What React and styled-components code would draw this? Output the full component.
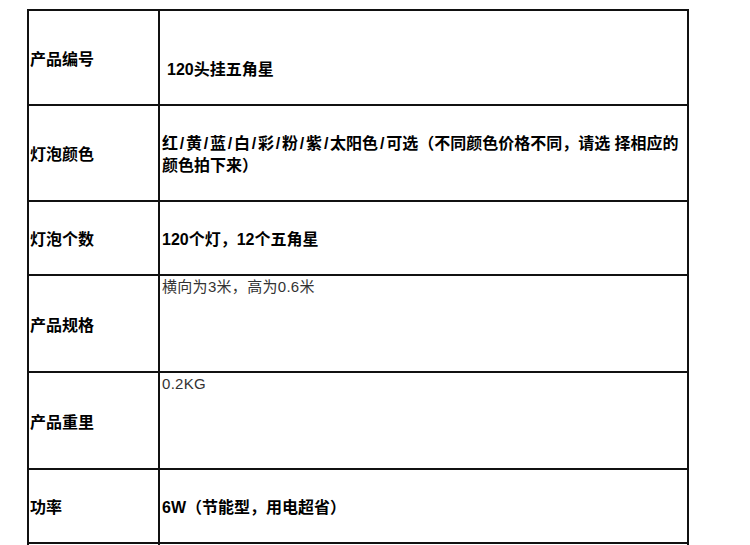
import React from 'react';
import styled, { createGlobalStyle } from 'styled-components';

const GlobalStyle = createGlobalStyle`
    html, body {
        margin: 0;
        padding: 0;
        background: #fff;
        overflow: hidden;
    }
    body {
        font-family: "Liberation Sans", "Noto Sans CJK SC", sans-serif;
    }
`;

const rows = [
    { label: '产品编号', height: 95, value: '120头挂五角星', bold: true, indent: 7, drop: 25 },
    { label: '灯泡颜色', height: 96, colors: true },
    { label: '灯泡个数', height: 74, value: '120个灯，12个五角星', bold: true },
    { label: '产品规格', height: 97, value: '横向为3米，高为0.6米', top: true },
    { label: '产品重里', height: 97, value: '0.2KG', top: true },
    { label: '功率', height: 74, value: '6W（节能型，用电超省）', bold: true },
    { label: '', height: 60, value: '' },
];

const colorList = ['红', '黄', '蓝', '白', '彩', '粉', '紫', '太阳色'];

export default function App() {
    return (
        <>
            <GlobalStyle />
            <Sheet>
                {rows.map((row, i) => (
                    <Row key={i} $height={row.height}>
                        <Label>{row.label}</Label>
                        {row.colors ? (
                            <Value $bold>
                                <div>
                                    {colorList.map((c) => (
                                        <React.Fragment key={c}>
                                            {c}<Sep>/</Sep>
                                        </React.Fragment>
                                    ))}
                                    可选（不同颜色价格不同，请选 择相应的
                                    <br />
                                    颜色拍下来）
                                </div>
                            </Value>
                        ) : (
                            <Value
                                $bold={row.bold}
                                $top={row.top}
                                $indent={row.indent}
                                $drop={row.drop}
                            >
                                <div>{row.value}</div>
                            </Value>
                        )}
                    </Row>
                ))}
            </Sheet>
        </>
    );
}

const Sheet = styled.div`
    margin: 9px 0 0 27px;
    width: 662px;
    box-sizing: border-box;
    border-top: 2px solid #111;
    border-left: 2px solid #111;
    background: #fff;
`;

const Row = styled.div`
    display: grid;
    grid-template-columns: 131px 1fr;
    height: ${(p) => p.$height}px;
`;

const Cell = styled.div`
    box-sizing: border-box;
    border-right: 2px solid #111;
    border-bottom: 2px solid #111;
    display: flex;
    line-height: 22px;
`;

const Label = styled(Cell)`
    align-items: center;
    padding: 4px 0 0 1px;
    font-size: 16px;
    font-weight: 700;
    color: #000;
`;

const Value = styled(Cell)`
    align-items: ${(p) => (p.$top ? 'flex-start' : 'center')};
    padding: ${(p) => (p.$drop ? `${p.$drop}px` : p.$top ? '0' : '4px')} 0 0 ${(p) => p.$indent || 2}px;
    font-size: ${(p) => (p.$bold ? '16px' : '15px')};
    font-weight: ${(p) => (p.$bold ? 700 : 400)};
    letter-spacing: ${(p) => (p.$bold ? '0' : '0.3px')};
    color: ${(p) => (p.$bold ? '#000' : '#333')};
`;

const Sep = styled.span`
    display: inline-block;
    width: 8px;
    text-align: center;
`;
